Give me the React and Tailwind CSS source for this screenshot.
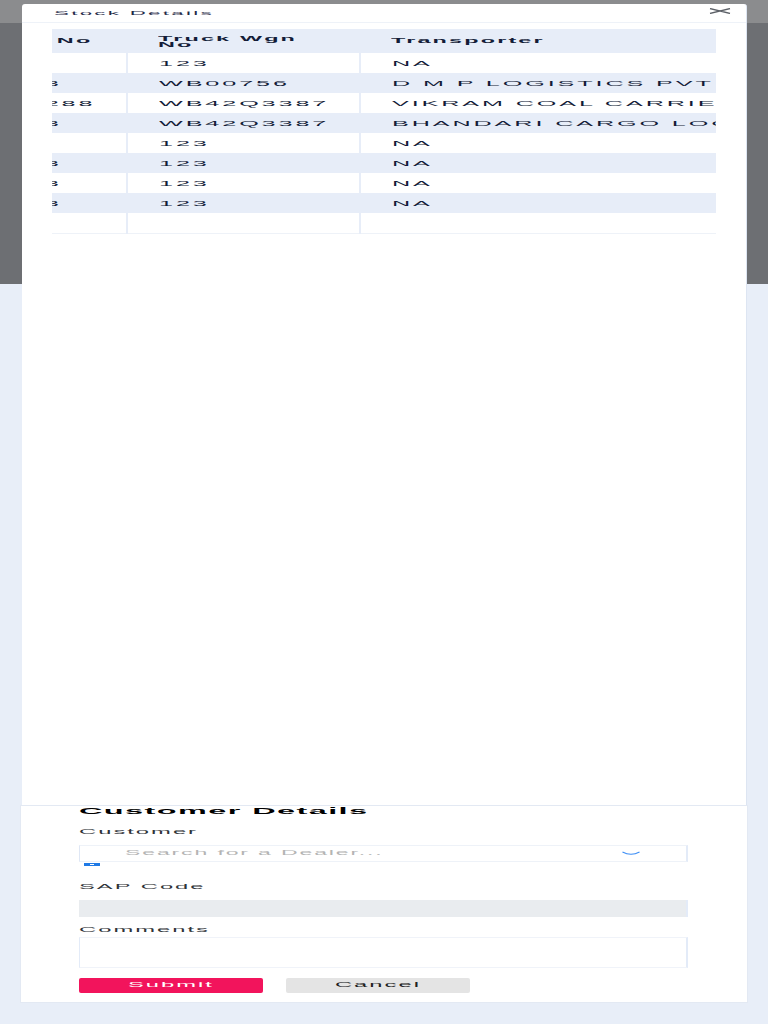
import { useLayoutEffect, useRef } from 'react';

const rows = [
  { no: '', truck: '123', transporter: 'NA' },
  { no: '1003', truck: 'WB00756', transporter: 'D M P LOGISTICS PVT LTD' },
  { no: '190288', truck: 'WB42Q3387', transporter: 'VIKRAM COAL CARRIERS' },
  { no: '1003', truck: 'WB42Q3387', transporter: 'BHANDARI CARGO LOGISTICS' },
  { no: '', truck: '123', transporter: 'NA' },
  { no: '1003', truck: '123', transporter: 'NA' },
  { no: '1003', truck: '123', transporter: 'NA' },
  { no: '1003', truck: '123', transporter: 'NA' },
  { no: '', truck: '', transporter: '' },
];

// stretched text, the whole screen renders glyphs very wide
function Wide({ children, center = false, className = '' }) {
  const origin = center ? 'origin-center' : 'origin-left';
  return (
    <span className={`inline-block whitespace-nowrap scale-x-[3.6] ${origin} ${className}`}>{children}</span>
  );
}

function StockModal() {
  const scroller = useRef(null);

  useLayoutEffect(() => {
    if (scroller.current) scroller.current.scrollLeft = 89;
  }, []);

  return (
    <div className="absolute left-[22px] top-[4px] w-[725px] h-[801px] bg-white rounded-t-[3px] border-r border-[#dde5f2]">
      {/* Header */}
      <div className="h-[19px] flex items-center justify-between pl-[32px] pr-[15px] border-b border-[#eef2f8]">
        <Wide className="text-[6.2px] tracking-[0.64px] leading-none text-[#1f2a48]">Stock Details</Wide>
        <svg width="22" height="6" viewBox="0 0 22 6" className="-mt-[4px]">
          <path d="M1 0.5 L21 5.5 M1 5.5 L21 0.5" stroke="#5d6168" strokeWidth="1.3" />
        </svg>
      </div>

      {/* Table */}
      <div ref={scroller} className="mt-[6px] ml-[30px] w-[664px] overflow-hidden">
        <table className="table-fixed border-collapse w-[820px] text-[7px] leading-[7px]">
          <colgroup>
            <col className="w-[164px]" />
            <col className="w-[233px]" />
            <col className="w-[423px]" />
          </colgroup>
          <thead>
            <tr className="h-[24px] bg-[#e7edf8] text-[#131c38]">
              <th className="p-0 pl-[31px] text-left align-middle">
                <Wide className="text-[6.5px] font-bold tracking-[0.6px] leading-none">SAP No</Wide>
              </th>
              <th className="p-0 pl-[31px] text-left align-middle">
                <Wide className="text-[6.5px] font-bold tracking-[0.6px] leading-[6px] mt-[2px]">
                  Truck Wgn
                  <br />
                  No
                </Wide>
              </th>
              <th className="p-0 pl-[31px] text-left align-middle">
                <Wide className="text-[6.5px] font-bold tracking-[0.6px] leading-none">Transporter</Wide>
              </th>
            </tr>
          </thead>
          <tbody>
            {rows.map((r, i) => (
              <tr
                key={i}
                className={`h-[20px] text-[#131c38] ${i % 2 === 1 ? 'bg-[#e7edf8]' : 'bg-white'} ${i === rows.length - 1 ? 'border-b border-[#eef2f8]' : ''}`}
              >
                <td className="p-0 pl-[31px] border-r-2 border-[#e7edf8] align-middle">
                  <Wide className="tracking-[0.8px] leading-none">{r.no}</Wide>
                </td>
                <td className="p-0 pl-[31px] border-r-2 border-[#e7edf8] align-middle">
                  <Wide className="tracking-[0.8px] leading-none">{r.truck}</Wide>
                </td>
                <td className="p-0 pl-[31px] align-middle">
                  <Wide className="tracking-[0.8px] leading-none">{r.transporter}</Wide>
                </td>
              </tr>
            ))}
          </tbody>
        </table>
      </div>
    </div>
  );
}

function CustomerCard() {
  return (
    <div className="mx-[20px] h-[198px] bg-white border border-[#e3e9f3] px-[58px] flex flex-col">
      <div className="h-[10px] flex items-center">
        <Wide className="text-[9px] font-bold tracking-[0.4px] leading-none text-black">Customer Details</Wide>
      </div>

      <div className="mt-[11px] h-[10px] flex items-center">
        <Wide className="text-[6.6px] tracking-[0.56px] leading-none text-[#2f3338]">Customer</Wide>
      </div>
      <div className="mt-[8px] h-[17px] w-[609px] border border-[#eef2f8] border-l-[#dfe7f5] border-r-2 border-r-[#e3ebf8] flex items-center pl-[45px] pr-[46px] justify-between">
        <Wide className="text-[6.4px] tracking-[0.52px] leading-none text-[#b4b4b4]">Search for a Dealer...</Wide>
        <svg width="18" height="5" viewBox="0 0 18 5">
          <path d="M0.5 1 Q9 5.5 17.5 1" stroke="#3b8df5" strokeWidth="1.2" fill="none" />
        </svg>
      </div>
      <div className="mt-px ml-[5px] w-[16px] h-[3px] bg-[#1f7ae6] flex items-center justify-center">
        <div className="w-[4px] h-px bg-white" />
      </div>

      <div className="mt-[16px] h-[10px] flex items-center">
        <Wide className="text-[6.6px] tracking-[0.56px] leading-none text-[#2f3338]">SAP Code</Wide>
      </div>
      <div className="mt-[8px] h-[17px] w-[609px] bg-[#e9ecef] border-r-2 border-[#e3ebf8]" />

      <div className="mt-[8px] h-[10px] flex items-center">
        <Wide className="text-[6.6px] tracking-[0.56px] leading-none text-[#2f3338]">Comments</Wide>
      </div>
      <div className="mt-[2px] h-[31px] w-[609px] border border-[#f0f3f9] border-l-[#e3ebf8] border-r-2 border-r-[#e3ebf8] bg-white" />

      <div className="mt-[10px] flex gap-[23px]">
        <button className="w-[184px] h-[15px] rounded-[2px] bg-[#f2145c] flex items-center justify-center">
          <Wide center className="text-[6.6px] tracking-[0.56px] leading-none text-white">Submit</Wide>
        </button>
        <button className="w-[184px] h-[15px] rounded-[2px] bg-[#e4e4e4] flex items-center justify-center">
          <Wide center className="text-[6.6px] tracking-[0.56px] leading-none text-[#222]">Cancel</Wide>
        </button>
      </div>
    </div>
  );
}

export default function App() {
  return (
    <div className="relative min-h-screen bg-[#e8eef8] overflow-hidden" style={{ fontFamily: '"Liberation Sans", Arial, sans-serif' }}>
      {/* dimmed page behind the modal */}
      <div className="h-[23px] bg-[#8b8c8e]" />
      <div className="h-[261px] bg-[#6d6f73]" />
      <div className="h-[521px]" />

      <CustomerCard />

      <StockModal />
    </div>
  );
}
